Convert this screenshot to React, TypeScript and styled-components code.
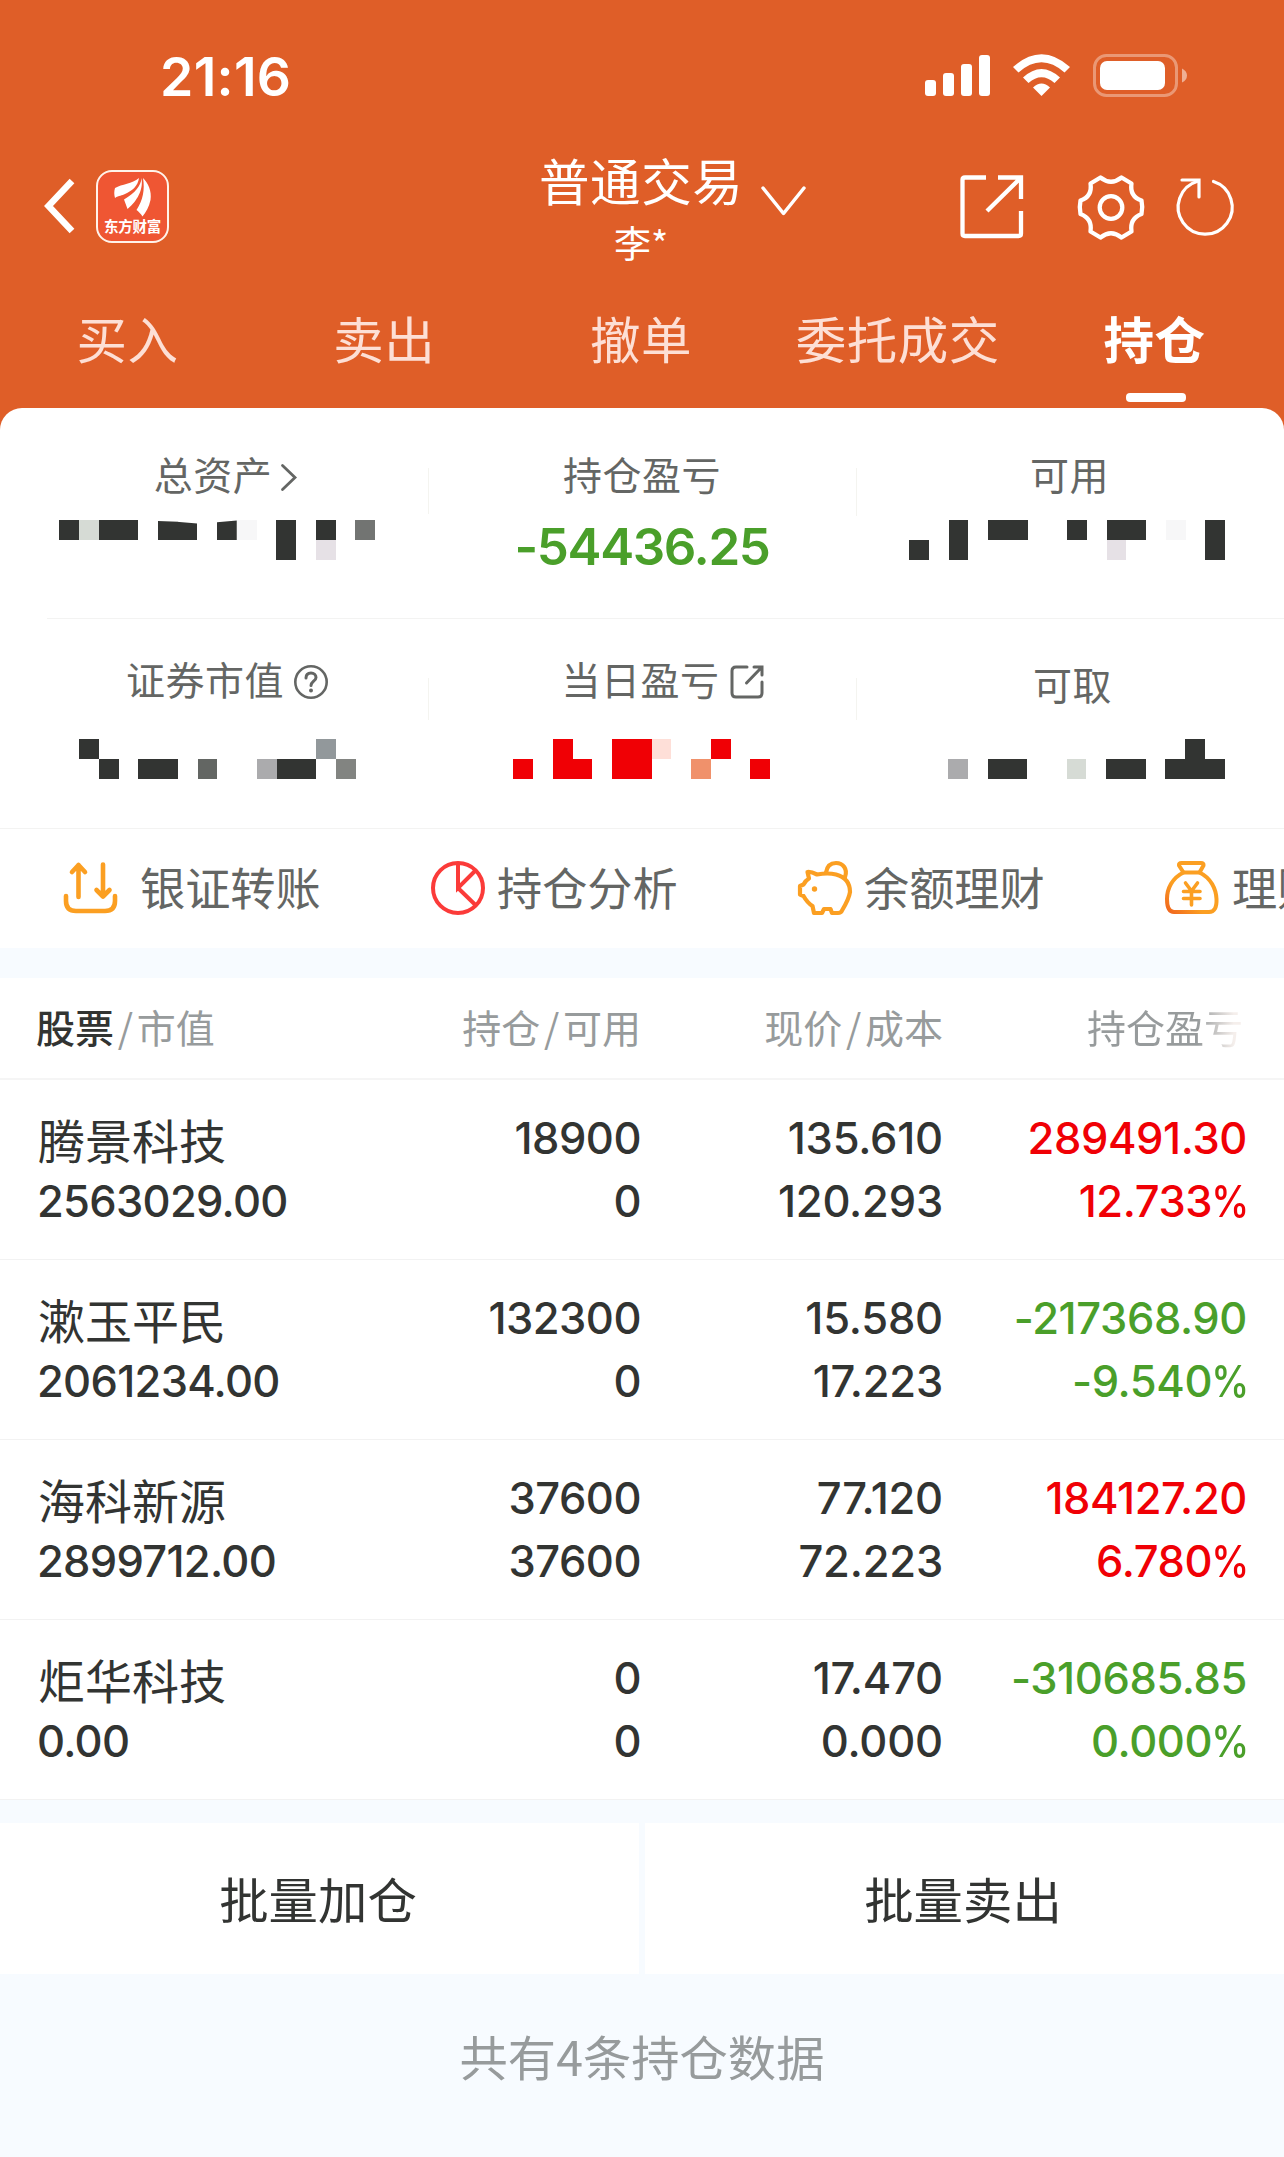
import React from "react";
import styled, { createGlobalStyle } from "styled-components";

const CJK = `"Noto Sans CJK SC", sans-serif`;
const NUM = `Inter, "Noto Sans CJK SC", sans-serif`;
const INK = "#323432";
const RED = "#f00005";
const GREEN = "#4a9f2a";
const ORANGE = "#df5e28";

const GlobalStyle = createGlobalStyle`
  * { box-sizing: border-box; }
  body { margin: 0; background: #f7fbff; }
  svg { display: block; flex: none; overflow: visible; }
`;

const Screen = styled.div`
  width: 1284px;
  height: 2157px;
  overflow: hidden;
  background: #f7fbff;
  font-family: ${CJK};
  color: ${INK};
  white-space: nowrap;
`;

/* ---------- header ---------- */

const Header = styled.header`
  height: 430px;
  background: ${ORANGE};
  color: #fff;
`;

const StatusBar = styled.div`
  display: flex;
  justify-content: space-between;
  height: 150px;
  padding: 54px 97px 0 160px;
`;

const Clock = styled.div`
  font: 600 53.5px/45px ${NUM};
  letter-spacing: 0.3px;
`;

const NavBar = styled.div`
  display: grid;
  grid-template-columns: 495px 1fr auto;
  height: 124px;
  padding: 0 49px 0 44px;
`;

const NavLeft = styled.div`
  display: flex;
  align-items: center;
  gap: 21px;
  height: 112px;
`;

const AppLogo = styled.div`
  display: flex;
  flex-direction: column;
  align-items: center;
  width: 73px;
  height: 73px;
  padding-top: 5px;
  border: 2px solid #fff3ea;
  border-radius: 16px;
  background: #ef5633;
`;

const LogoName = styled.div`
  font: 700 14.5px/18px ${CJK};
  letter-spacing: -0.2px;
`;

const NavTitle = styled.div`
  display: flex;
  gap: 18px;
`;

const TitleText = styled.div`
  display: flex;
  flex-direction: column;
  align-items: center;
  margin-top: -4px;
`;

const Title = styled.div`
  font: 400 50.5px/66px ${CJK};
  letter-spacing: 0.6px;
`;

const Account = styled.div`
  margin-top: 5px;
  font: 400 37px/50px ${CJK};
`;

const TitleArrow = styled.div`
  padding-top: 36px;
`;

const NavRight = styled.div`
  display: flex;
  justify-content: flex-end;
  align-items: center;
  height: 114px;
`;

const IconSlot = styled.div<{ $gap: number }>`
  margin-left: ${(p) => p.$gap}px;
`;

const Tabs = styled.nav`
  display: grid;
  grid-template-columns: repeat(5, 1fr);
  height: 134px;
`;

const Tab = styled.div<{ $active?: boolean }>`
  display: flex;
  flex-direction: column;
  align-items: center;
  padding-top: 29px;
  font: ${(p) => (p.$active ? 700 : 400)} 50.5px/68px ${CJK};
  letter-spacing: 0.5px;
  color: ${(p) => (p.$active ? "#fff" : "#fddfd5")};
`;

const TabName = styled.span`
  padding-right: 2px;
`;

const TabLine = styled.div`
  width: 60px;
  height: 9px;
  margin-top: 22px;
  border-radius: 4px;
  background: #fff;
`;

/* ---------- account summary ---------- */

const Summary = styled.section`
  margin-top: -22px;
  height: 540px;
  border-radius: 22px 22px 0 0;
  background: #fff;
`;

const SummaryRow = styled.div<{ $height: number; $top: number }>`
  display: grid;
  grid-template-columns: 429px 428px 427px;
  height: ${(p) => p.$height}px;
  padding-top: ${(p) => p.$top}px;
`;

const SummaryCell = styled.div<{ $rule?: string }>`
  display: flex;
  flex-direction: column;
  align-items: center;
  background: ${(p) =>
    p.$rule
      ? `linear-gradient(#f4f4f0, #f4f4f0) 100% ${p.$rule} no-repeat`
      : "none"};
`;

const Label = styled.div<{ $shift: number; $gap?: number; $drop?: number }>`
  display: flex;
  align-items: center;
  gap: ${(p) => p.$gap ?? 0}px;
  height: 38px;
  margin-top: ${(p) => p.$drop ?? 0}px;
  padding-left: ${(p) => Math.max(p.$shift, 0) * 2}px;
  padding-right: ${(p) => Math.max(-p.$shift, 0) * 2}px;
  color: #646664;
`;

const LabelText = styled.span`
  padding-bottom: 8px;
  font: 400 39px/38px ${CJK};
  letter-spacing: 0.5px;
`;

const Amount = styled.div`
  margin: 28px 2px 0 0;
  font: 600 51px/46px ${NUM};
  letter-spacing: -1.35px;
  color: ${GREEN};
`;

const SummaryLine = styled.div<{ $inset: number }>`
  height: 1px;
  margin-left: ${(p) => p.$inset}px;
  background: #f3f3f2;
`;

const MosaicBox = styled.div<{ $top: number; $left: number }>`
  display: grid;
  grid-auto-rows: 20px;
  align-self: flex-start;
  margin: ${(p) => p.$top}px 0 0 ${(p) => p.$left}px;
`;

const MosaicRow = styled.div`
  display: flex;
`;

const Pixel = styled.i<{ $color: string; $clip?: string }>`
  width: 19.76px;
  height: 20px;
  background: ${(p) => p.$color};
  clip-path: ${(p) => p.$clip ?? "none"};
`;

const PIXELS: Record<string, string> = {
  " ": "transparent",
  "#": "#323432",
  x: "#323432",
  y: "#323432",
  z: "#323432",
  a: "#d6dbd5",
  b: "#f7f7f8",
  c: "#e6e1e6",
  d: "#727472",
  e: "#636663",
  f: "#ababad",
  g: "#92989b",
  h: "#828481",
  R: "#f00005",
  p: "#fedfd8",
  o: "#f0916b",
};

/* tiles whose upper edge is slightly slanted */
const SLANTS: Record<string, string> = {
  x: "polygon(0 5%, 105% 9%, 105% 100%, 0 100%)",
  y: "polygon(-5% 9%, 100% 17%, 100% 100%, -5% 100%)",
  z: "polygon(0 11%, 100% 2%, 100% 100%, 0 100%)",
};

function Mosaic({ rows, top, left }: { rows: string[]; top: number; left: number }) {
  return (
    <MosaicBox $top={top} $left={left}>
      {rows.map((row, r) => (
        <MosaicRow key={r}>
          {row.split("").map((c, i) => (
            <Pixel key={i} $color={PIXELS[c]} $clip={SLANTS[c]} />
          ))}
        </MosaicRow>
      ))}
    </MosaicBox>
  );
}

/* ---------- shortcuts ---------- */

const Shortcuts = styled.div`
  display: flex;
  height: 117px;
  padding-left: 63px;
  overflow: hidden;
`;

const Shortcut = styled.div<{ $gap: number; $width: number }>`
  display: flex;
  flex: none;
  align-items: center;
  gap: ${(p) => p.$gap}px;
  width: ${(p) => p.$width}px;
  color: #646664;
`;

const ShortcutText = styled.span`
  padding-bottom: 2px;
  font: 400 45.2px/60px ${CJK};
`;

/* ---------- holdings table ---------- */

const Table = styled.section`
  margin-top: 30px;
  background: #fff;
`;

const gridColumns = `
  display: grid;
  grid-template-columns: 390px 214px 302px 304px;
  padding: 0 37px;
`;

const HeadRow = styled.div`
  ${gridColumns}
  height: 102px;
  padding-left: 36px;
  padding-bottom: 5px;
  align-items: center;
  border-bottom: 2px solid #f5f5f5;
  font: 400 39px/56px ${CJK};
  color: #979b9c;
`;

const HeadCell = styled.div<{ $right?: boolean; $fade?: boolean }>`
  text-align: ${(p) => (p.$right ? "right" : "left")};
  ${(p) =>
    p.$right &&
    `padding-right: ${p.$fade ? 3 : 0}px;
     margin-right: ${p.$fade ? 0 : -1}px;`}
  ${(p) =>
    p.$fade &&
    `background: linear-gradient(90deg, #979b9c 84%, #f5efec 96%);
     background-clip: text;
     -webkit-background-clip: text;
     color: transparent;`}
`;

const Slash = styled.span`
  margin: 0 3.7px;
`;

const Strong = styled.span`
  font-weight: 500;
  color: ${INK};
`;

const Row = styled.div`
  ${gridColumns}
  height: 180px;
  padding-top: 28px;
  border-bottom: 1px solid #f2f2f2;
`;

const Cell = styled.div<{ $right?: boolean; $color?: string; $track?: number }>`
  display: flex;
  flex-direction: column;
  align-items: ${(p) => (p.$right ? "flex-end" : "flex-start")};
  letter-spacing: ${(p) => p.$track ?? -0.5}px;
  color: ${(p) => p.$color ?? INK};
`;

const Name = styled.div`
  height: 63px;
  padding-left: 1px;
  font: 400 47px/62px ${CJK};
  letter-spacing: 0;
`;

const Num = styled.div`
  height: 63px;
  font: 500 43.5px/60px ${NUM};
`;

const Percent = styled.span`
  display: inline-block;
  margin: 0 -2px 0 -6px;
  transform: scaleX(0.88);
  transform-origin: right center;
`;

/* ---------- footer ---------- */

const Batch = styled.div`
  display: grid;
  grid-template-columns: 1fr 1fr;
  gap: 6px;
  height: 151px;
  margin-top: 23px;
`;

const BatchButton = styled.button`
  border: 0;
  padding: 0 3px 2px 0;
  background: #fff;
  color: ${INK};
  font: 400 49.4px/64px ${CJK};
`;

const Total = styled.div`
  margin-top: 46px;
  text-align: center;
  font: 400 48.3px/70px ${CJK};
  color: #979b9c;
`;

/* ---------- icons ---------- */

const StatusIcons = () => (
  <svg width="262" height="43" viewBox="925 54 262 43" fill="#fff">
    <rect x="925" y="80" width="11" height="16" rx="3" />
    <rect x="943" y="73" width="11" height="23" rx="3" />
    <rect x="961" y="64" width="11" height="32" rx="3" />
    <rect x="979" y="55" width="11" height="41" rx="3" />
    <path d="M1013 67 Q1041.500 41.500 1070 67 L1064.500 72.500 Q1041.500 52 1018.500 72.500 Z" />
    <path d="M1023 77.500 Q1041.500 60.500 1060 77.500 L1054.500 83 Q1041.500 71.500 1028.500 83 Z" />
    <path d="M1033 87.500 Q1041.500 79.500 1050 87.500 L1041.500 96 Z" />
    <rect x="1094.500" y="55.500" width="82" height="40" rx="12" fill="none" stroke="#fff" strokeOpacity=".36" strokeWidth="3" />
    <rect x="1100" y="61" width="65" height="29" rx="7" />
    <path d="M1182 68.500 Q1187 71 1187 75.500 Q1187 80 1182 82.500 Z" fillOpacity=".5" />
  </svg>
);

const BackIcon = () => (
  <svg width="31" height="54" viewBox="0 0 31 54" fill="none" stroke="#fff" strokeWidth="6.500">
    <path d="M28 2 L4.500 27 L28 52" />
  </svg>
);

const LogoMark = () => (
  <svg width="38" height="40" viewBox="0 0 38 40" fill="#fff">
    <path d="M25 1 C18 7 8 7 1 11 C0 14 0 18 1 21 C5 18 8 19 11 17 C18 14 24 9 25 1 Z" />
    <path d="M27.500 1 C27 9 21 16 10 22.500 L13.500 32 C20 27 30 15 27.500 1 Z" />
    <path d="M29 1 C34 6 38 14 36.500 23 C35 30 32 35 28.500 39.500 C27 37 24 34 22.500 33 C29 23 31 13 29 1 Z" />
  </svg>
);

const ChevronDown = () => (
  <svg width="45" height="30" viewBox="0 0 45 30" fill="none" stroke="#fff" strokeWidth="3.500" strokeLinecap="round" strokeLinejoin="round">
    <path d="M2 2 L22.500 27.500 L43 2" />
  </svg>
);

const OpenIcon = () => (
  <svg width="64" height="64" viewBox="0 0 64 64" fill="none" stroke="#fff" strokeWidth="4.300">
    <path d="M26 2.500 H5 Q2.500 2.500 2.500 5 V58.500 Q2.500 61 5 61 H58.500 Q61 61 61 58.500 V36" />
    <path d="M38 2.500 H61 V24 M60 3.500 L27 36" />
  </svg>
);

const GearIcon = () => (
  <svg width="66" height="65" viewBox="0 0 66 65" fill="none" stroke="#fff" strokeWidth="4.300" strokeLinejoin="round">
    <path d="M22.500 2.500 Q33 11 43.500 2.500 L53.500 8.500 Q51.500 21.500 63.500 25.500 Q65 32.500 63.500 39 Q51.500 43.500 53.500 56.500 L43.500 62.500 Q33 54 22.500 62.500 L12.500 56.500 Q14.500 43.500 2.500 39 Q1 32.500 2.500 25.500 Q14.500 21.500 12.500 8.500 Z" />
    <circle cx="33" cy="32.500" r="11.300" />
  </svg>
);

const RefreshIcon = () => (
  <svg width="57" height="58" viewBox="0 0 57 58" fill="none" stroke="#fff" strokeWidth="3.200" strokeLinecap="round">
    <path d="M35.500 3.500 A27 27 0 1 1 19.500 3.300" />
    <path d="M4 2 H21 V19" />
  </svg>
);

const ChevronRight = () => (
  <svg width="16" height="27" viewBox="0 0 16 27" fill="none" stroke="#646664" strokeWidth="2.800" strokeLinecap="round">
    <path d="M1.500 1.500 L14 13.500 L1.500 25.500" />
  </svg>
);

const HelpIcon = () => (
  <svg width="34" height="34" viewBox="0 0 34 34" fill="none" stroke="#646664" strokeWidth="2.600" strokeLinecap="round">
    <circle cx="17" cy="17" r="15.700" />
    <path d="M12 13 C12 9.500 14 8 17 8 C20 8 22 10 22 12.500 C22 16 17 16.500 17 20.500" strokeWidth="3" />
    <circle cx="17" cy="25.500" r="2" fill="#646664" stroke="none" />
  </svg>
);

const SmallOpenIcon = () => (
  <svg width="34" height="34" viewBox="0 0 34 34" fill="none" stroke="#646664" strokeWidth="3" strokeLinecap="round">
    <path d="M17 2 H6 Q2 2 2 6 V28 Q2 32 6 32 H28 Q32 32 32 28 V17" />
    <path d="M24 2 H32 V10 M31 3 L16.500 18" />
  </svg>
);

const TransferIcon = () => (
  <svg width="54" height="54" viewBox="0 0 54 54" fill="none" stroke="#fb9f22" strokeWidth="4.600" strokeLinecap="round" strokeLinejoin="round">
    <path d="M3 35 V40 Q3 50 13 50 H42 Q52 50 52 40 V35" />
    <path d="M15.500 36 V4 M9 11 L15.500 4 L22 11" />
    <path d="M40 3.500 V35 M33.500 29 L40 35.500 L46.500 29" />
  </svg>
);

const PieIcon = () => (
  <svg width="54" height="54" viewBox="0 0 54 54" fill="none" stroke="#fb3b39" strokeWidth="4">
    <circle cx="27" cy="27" r="25" />
    <path d="M27 2 V27 L44.500 9.500 M27 27 L45 44.500" />
  </svg>
);

const PigIcon = () => (
  <svg width="54" height="54" viewBox="0 0 54 54" fill="none" stroke="#fb9f22" strokeWidth="4.200" strokeLinecap="round" strokeLinejoin="round">
    <path d="M9.500 11 Q13 10.500 19 13.500 Q30 11.500 38 13.500 C47 16 52 22 52 31 Q51 38 44 49.500 Q43 52 40 52 H34 L32.500 48 H26 L24 52 H16 L14.500 45 Q9.500 42 5.500 35 L2 33.500 V25 L5.500 23.500 Q7.500 19.500 11 17.500 Z" />
    <path d="M28 11.500 C29 5 33 2 38 2 C45 2 50 8 47 16" />
    <circle cx="16.500" cy="28" r="2.700" fill="#fb9f22" stroke="none" />
  </svg>
);

const BagIcon = () => (
  <svg width="54" height="54" viewBox="0 0 54 54" fill="none" stroke="#fb9f22" strokeWidth="4" strokeLinecap="round" strokeLinejoin="round">
    <defs>
      <linearGradient id="bag" x1="0" y1="1" x2=".6" y2=".5">
        <stop offset="0" stopColor="#f0641e" />
        <stop offset=".7" stopColor="#fb9f22" />
      </linearGradient>
    </defs>
    <path d="M18.500 11.500 L14 4.500 Q13.500 2 16.500 2 H36 Q39 2 38.500 4.500 L34.500 11.500 Z" />
    <path d="M18.500 11.500 C7 17 2 28 2 38 Q2 51 9 51 H44 Q52 51 51.500 38 C51 28 46 17 34.500 11.500" stroke="url(#bag)" />
    <path d="M20.500 22 L26.500 30 L32.500 22 M18.500 30.500 H35 M18.500 37.500 H35 M26.500 30 V44" strokeWidth="3.600" />
  </svg>
);

/* ---------- data ---------- */

const TABS = ["买入", "卖出", "撤单", "委托成交", "持仓"];

const HOLDINGS = [
  { name: "腾景科技", value: "2563029.00", held: "18900", free: "0", price: "135.610", cost: "120.293", profit: "289491.30", rate: "12.733", up: true },
  { name: "漱玉平民", value: "2061234.00", held: "132300", free: "0", price: "15.580", cost: "17.223", profit: "-217368.90", rate: "-9.540", up: false },
  { name: "海科新源", value: "2899712.00", held: "37600", free: "37600", price: "77.120", cost: "72.223", profit: "184127.20", rate: "6.780", up: true },
  { name: "炬华科技", value: "0.00", held: "0", free: "0", price: "17.470", cost: "0.000", profit: "-310685.85", rate: "0.000", up: false },
];

export default function App() {
  return (
    <>
      <GlobalStyle />
      <Screen>
        <Header>
          <StatusBar>
            <Clock>21:16</Clock>
            <StatusIcons />
          </StatusBar>
          <NavBar>
            <NavLeft>
              <BackIcon />
              <AppLogo>
                <LogoMark />
                <LogoName>东方财富</LogoName>
              </AppLogo>
            </NavLeft>
            <NavTitle>
              <TitleText>
                <Title>普通交易</Title>
                <Account>李*</Account>
              </TitleText>
              <TitleArrow>
                <ChevronDown />
              </TitleArrow>
            </NavTitle>
            <NavRight>
              <OpenIcon />
              <IconSlot $gap={54}>
                <GearIcon />
              </IconSlot>
              <IconSlot $gap={34}>
                <RefreshIcon />
              </IconSlot>
            </NavRight>
          </NavBar>
          <Tabs>
            {TABS.map((t) => (
              <Tab key={t} $active={t === "持仓"}>
                <TabName>{t}</TabName>
                {t === "持仓" && <TabLine />}
              </Tab>
            ))}
          </Tabs>
        </Header>

        <Summary>
          <SummaryRow $height={210} $top={50}>
            <SummaryCell $rule="10px / 1px 46px">
              <Label $shift={11} $gap={9}><LabelText>总资产</LabelText><ChevronRight /></Label>
              <Mosaic top={24} left={59} rows={["#a## xy zb # # d", "           # c  "]} />
            </SummaryCell>
            <SummaryCell $rule="10px / 1px 48px">
              <Label $shift={-1}><LabelText>持仓盈亏</LabelText></Label>
              <Amount>-54436.25</Amount>
            </SummaryCell>
            <SummaryCell>
              <Label $shift={-1}><LabelText>可用</LabelText></Label>
              <Mosaic top={24} left={52} rows={["  # ##  # ## b #", "# #       c    #"]} />
            </SummaryCell>
          </SummaryRow>
          <SummaryLine $inset={47} />
          <SummaryRow $height={209} $top={44}>
            <SummaryCell $rule="15px / 1px 42px">
              <Label $shift={12.5} $gap={10}><LabelText>证券市值</LabelText><HelpIcon /></Label>
              <Mosaic top={38} left={79} rows={["#           g ", " # ## e  f## h"]} />
            </SummaryCell>
            <SummaryCell $rule="15px / 1px 42px">
              <Label $shift={19.5} $gap={10}><LabelText>当日盈亏</LabelText><SmallOpenIcon /></Label>
              <Mosaic top={38} left={84.4} rows={["  R  RRp  R  ", "R RR RR  o  R"]} />
            </SummaryCell>
            <SummaryCell>
              <Label $shift={2} $drop={5}><LabelText>可取</LabelText></Label>
              <Mosaic top={33} left={91} rows={["            # ", "f ##  a ## ###"]} />
            </SummaryCell>
          </SummaryRow>
          <SummaryLine $inset={0} />
          <Shortcuts>
            <Shortcut $gap={23} $width={368}><TransferIcon /><ShortcutText>银证转账</ShortcutText></Shortcut>
            <Shortcut $gap={12} $width={367}><PieIcon /><ShortcutText>持仓分析</ShortcutText></Shortcut>
            <Shortcut $gap={12} $width={367}><PigIcon /><ShortcutText>余额理财</ShortcutText></Shortcut>
            <Shortcut $gap={13} $width={367}><BagIcon /><ShortcutText>理财</ShortcutText></Shortcut>
          </Shortcuts>
        </Summary>

        <Table>
          <HeadRow>
            <HeadCell><Strong>股票</Strong><Slash>/</Slash>市值</HeadCell>
            <HeadCell $right>持仓<Slash>/</Slash>可用</HeadCell>
            <HeadCell $right>现价<Slash>/</Slash>成本</HeadCell>
            <HeadCell $right $fade>持仓盈亏</HeadCell>
          </HeadRow>
          {HOLDINGS.map((h) => (
            <Row key={h.name}>
              <Cell $track={-0.7}>
                <Name>{h.name}</Name>
                <Num>{h.value}</Num>
              </Cell>
              <Cell $right>
                <Num>{h.held}</Num>
                <Num>{h.free}</Num>
              </Cell>
              <Cell $right $track={-0.2}>
                <Num>{h.price}</Num>
                <Num>{h.cost}</Num>
              </Cell>
              <Cell $right $color={h.up ? RED : GREEN} $track={-0.4}>
                <Num>{h.profit}</Num>
                <Num>{h.rate}<Percent>%</Percent></Num>
              </Cell>
            </Row>
          ))}
        </Table>

        <Batch>
          <BatchButton>批量加仓</BatchButton>
          <BatchButton>批量卖出</BatchButton>
        </Batch>
        <Total>共有4条持仓数据</Total>
      </Screen>
    </>
  );
}
